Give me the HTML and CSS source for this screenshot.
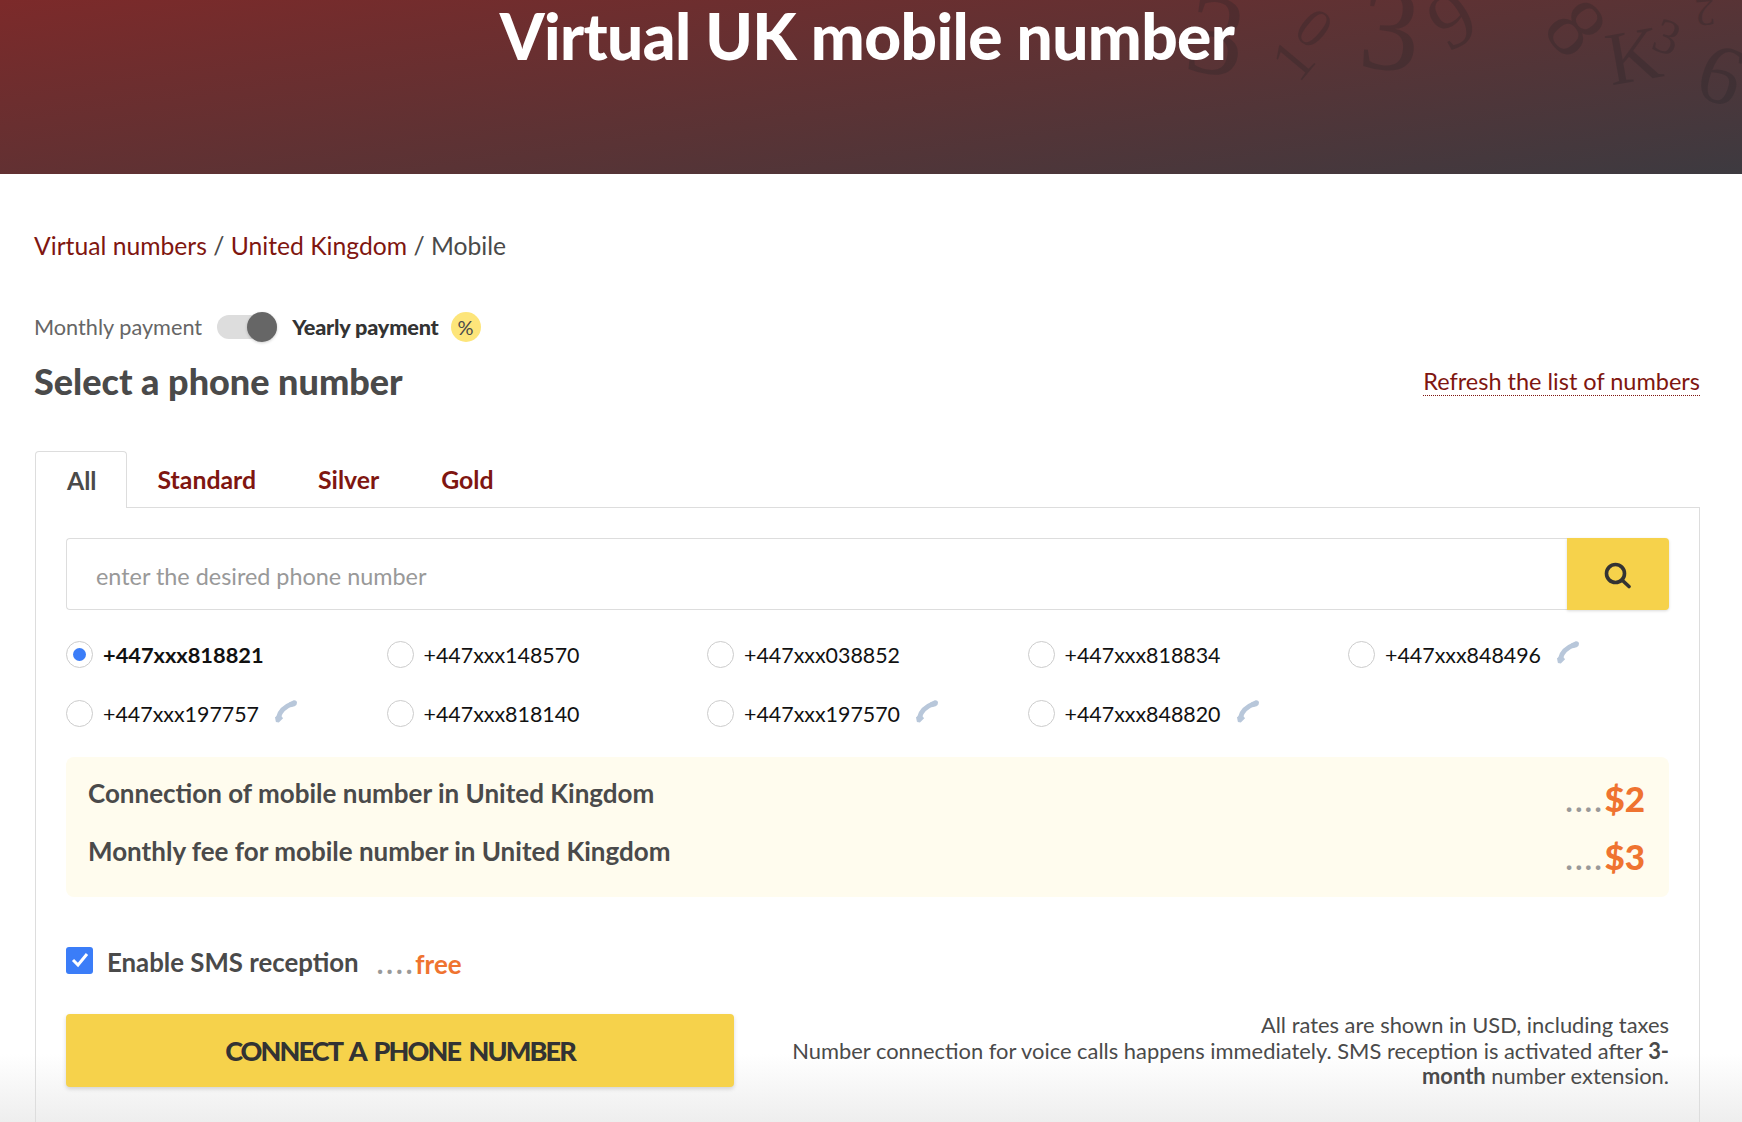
FILE: index.html
```html
<!DOCTYPE html>
<html lang="en">
<head>
    <meta charset="UTF-8">
    <title>Virtual UK mobile number</title>
    <link rel="stylesheet" href="styles.css">
</head>
<body>
    <svg width="0" height="0" class="defs">
        <symbol id="phone" viewBox="0 0 24 24">
            <path d="M4.500 19C6 13 11 7.500 19 4.500" fill="none" stroke="currentColor" stroke-width="5"/>
            <path d="M1 18.500L6 15.500L9.500 19.500L5 24L2 23.500Z" fill="currentColor"/>
            <path d="M15.500 3.500L20.500 .8Q24 .5 24 3.500Q24 6.500 21.500 7L17.500 8Z" fill="currentColor"/>
        </symbol>
    </svg>

    <header class="hero">
        <svg class="hero-digits" viewBox="0 0 742 174" width="742" height="174">
            <text transform="translate(216 36) rotate(8)" y="0.33em" font-size="115">3</text>
            <text transform="translate(293 60) rotate(-50)" y="0.33em" font-size="60">1</text>
            <text transform="translate(314 28) rotate(40)" y="0.33em" font-size="56">0</text>
            <text transform="translate(390 30) rotate(5)" y="0.33em" font-size="120">3</text>
            <text transform="translate(452 20) rotate(-30)" y="0.33em" font-size="80">9</text>
            <text transform="translate(576 28) rotate(50)" y="0.33em" font-size="85">8</text>
            <text transform="translate(634 56) rotate(-10)" y="0.33em" font-size="76">K</text>
            <text transform="translate(667 37) rotate(20)" y="0.33em" font-size="50">3</text>
            <text transform="translate(705 12) rotate(175)" y="0.33em" font-size="40">2</text>
            <text transform="translate(721 75) rotate(20)" y="0.33em" font-size="85">6</text>
        </svg>
        <h1>Virtual UK mobile number</h1>
    </header>

    <main class="container">
        <div class="crumbs">
            <a href="#">Virtual numbers</a> / <a href="#">United Kingdom</a> / Mobile
        </div>

        <div class="billing">
            <span class="billing-off">Monthly payment</span>
            <span class="toggle"><span class="toggle-knob"></span></span>
            <b class="billing-on">Yearly payment</b>
            <span class="percent">%</span>
        </div>

        <div class="title-row">
            <h2>Select a phone number</h2>
            <a href="#" class="refresh">Refresh the list of numbers</a>
        </div>

        <nav class="tabs">
            <a href="#" class="tab active">All</a>
            <a href="#" class="tab">Standard</a>
            <a href="#" class="tab">Silver</a>
            <a href="#" class="tab">Gold</a>
        </nav>

        <section class="panel">
            <div class="search">
                <input type="text" class="search-input" placeholder="enter the desired phone number">
                <button class="search-btn">
                    <svg width="28" height="28" viewBox="0 0 28 28" fill="none" stroke="#333" stroke-width="3.600">
                        <circle cx="12.500" cy="12.500" r="9"/>
                        <path d="M19 19L26 25.500" stroke-linecap="round"/>
                    </svg>
                </button>
            </div>

            <div class="numbers">
                <label class="number selected"><span class="radio"></span>+447xxx818821</label>
                <label class="number"><span class="radio"></span>+447xxx148570</label>
                <label class="number"><span class="radio"></span>+447xxx038852</label>
                <label class="number"><span class="radio"></span>+447xxx818834</label>
                <label class="number"><span class="radio"></span>+447xxx848496<svg class="phone"><use href="#phone"/></svg></label>
                <label class="number"><span class="radio"></span>+447xxx197757<svg class="phone"><use href="#phone"/></svg></label>
                <label class="number"><span class="radio"></span>+447xxx818140</label>
                <label class="number"><span class="radio"></span>+447xxx197570<svg class="phone"><use href="#phone"/></svg></label>
                <label class="number"><span class="radio"></span>+447xxx848820<svg class="phone"><use href="#phone"/></svg></label>
            </div>

            <div class="fees">
                <div class="fee">
                    <span class="fee-name">Connection of mobile number in United Kingdom</span>
                    <span class="fee-price"><i class="dots">....</i>$2</span>
                </div>
                <div class="fee">
                    <span class="fee-name">Monthly fee for mobile number in United Kingdom</span>
                    <span class="fee-price"><i class="dots">....</i>$3</span>
                </div>
            </div>

            <div class="sms">
                <span class="check">
                    <svg width="18" height="16" viewBox="0 0 18 16" fill="none" stroke="#fff" stroke-width="3"><path d="M2 8L7 13L16 2"/></svg>
                </span>
                <span class="sms-label">Enable SMS reception</span>
                <span class="sms-free"><i class="dots">....</i>free</span>
            </div>

            <div class="bottom">
                <button class="connect">CONNECT A PHONE NUMBER</button>
                <p class="note">All rates are shown in USD, including taxes<br>Number connection for voice calls happens immediately. SMS reception is activated after <b>3-month</b> number extension.</p>
            </div>
        </section>
    </main>
</body>
</html>
```
FILE: styles.css
```css
* {
    margin: 0;
    padding: 0;
    box-sizing: border-box;
}

html, body {
    height: 1122px;
    overflow: hidden;
}

html {
    background: #fff;
}

body {
    font-family: Lato, "Noto Sans", sans-serif;
    font-size: 22px;
    color: #4a4a4a;
    position: relative;
}

/* bottom fade, sits behind the content */
body::after {
    content: '';
    position: absolute;
    left: 0;
    right: 0;
    bottom: 0;
    height: 68px;
    background: linear-gradient(rgba(238, 238, 238, 0), #eee);
    pointer-events: none;
    z-index: -1;
}

a {
    color: #7f1610;
    text-decoration: none;
}

.defs {
    position: absolute;
}

.hero {
    height: 174px;
    position: relative;
    overflow: hidden;
    background: linear-gradient(172deg, #7c2a2a 0%, #5a3335 55%, #3d3a40 100%);
    padding-right: 8px;
    text-align: center;
}

.hero h1 {
    position: relative;
    font-size: 64px;
    line-height: 72px;
    font-weight: 900;
    letter-spacing: -0.6px;
    color: #fff;
}

.hero-digits {
    position: absolute;
    top: 0;
    right: 0;
    font-family: "Liberation Serif", serif;
    text-anchor: middle;
    fill: #1e2024;
    opacity: 0.24;
}

.container {
    padding: 58px 42px 0 34px;
}

.crumbs {
    font-size: 24.700px;
    line-height: 28px;
}

.billing {
    display: flex;
    align-items: center;
    height: 30px;
    margin-top: 52px;
}

.billing-off {
    color: #666;
    font-size: 21.700px;
}

.toggle {
    position: relative;
    width: 60px;
    height: 24px;
    margin-left: 15px;
    border-radius: 12px;
    background: #ddd;
}

.toggle-knob {
    position: absolute;
    right: 0;
    top: -3px;
    width: 30px;
    height: 30px;
    border-radius: 50%;
    background: #666;
    box-shadow: 0 1px 3px rgba(0, 0, 0, 0.2);
}

.billing-on {
    margin-left: 15px;
    font-size: 21.700px;
    font-weight: 900;
    letter-spacing: -0.2px;
    color: #333;
}

.percent {
    width: 30px;
    height: 30px;
    margin-left: 12px;
    border-radius: 50%;
    background: #fde57a;
    font-size: 20px;
    line-height: 30px;
    text-align: center;
}

.title-row {
    display: flex;
    justify-content: space-between;
    align-items: center;
    margin-top: 17px;
}

.title-row h2 {
    font-size: 36px;
    line-height: 44px;
    font-weight: 900;
}

.refresh {
    font-size: 23.500px;
    border-bottom: 1px dotted #7f1610;
    line-height: 27px;
    margin-top: 2px;
}

.tabs {
    display: flex;
    align-items: flex-end;
    margin-top: 48px;
    padding-left: 1px;
    height: 56px;
}

.tab {
    height: 56px;
    padding: 0 31px;
    font-size: 24.800px;
    font-weight: 700;
    line-height: 58px;
}

.tab.active {
    color: #4a4a4a;
    background: #fff;
    border: 1px solid #ddd;
    border-bottom: none;
    border-radius: 4px 4px 0 0;
    position: relative;
    margin-bottom: -1px;
    height: 57px;
    padding-right: 29px;
    z-index: 1;
}

.panel {
    margin-left: 1px;
    height: 700px;
    padding: 30px 30px;
    border: 1px solid #ddd;
}

.search {
    display: flex;
    height: 72px;
}

.search-input {
    flex: 1;
    border: 1px solid #ddd;
    border-right: none;
    border-radius: 4px 0 0 4px;
    padding: 3px 29px 0;
    font-family: inherit;
    font-size: 23.400px;
    outline: none;
}

.search-input::placeholder {
    color: #999;
}

.search-btn {
    width: 102px;
    padding: 4px 3px 0 0;
    border: none;
    border-radius: 0 4px 4px 0;
    background: #f6d24b;
    box-shadow: 0 1px 3px rgba(0, 0, 0, 0.15);
}

.numbers {
    display: grid;
    grid-template-columns: repeat(5, 320.500px);
    grid-auto-rows: 59px;
    margin-top: 15px;
}

.number {
    display: flex;
    align-items: center;
    color: #111;
    font-size: 21.400px;
}

.number.selected {
    font-weight: 700;
    font-size: 21.800px;
}

.radio {
    position: relative;
    width: 27px;
    height: 27px;
    margin-right: 10px;
    border: 1px solid #ccc;
    border-radius: 50%;
}

.selected .radio::after {
    content: '';
    position: absolute;
    left: 6px;
    top: 6px;
    width: 13px;
    height: 13px;
    border-radius: 50%;
    background: #3b7df8;
}

.phone {
    width: 23px;
    height: 24px;
    margin: -6px 0 0 15px;
    color: #b8c7da;
}

.fees {
    margin-top: 14px;
    padding: 10px 24px 9px 22px;
    height: 140px;
    border-radius: 8px;
    background: #fffcee;
}

.fee {
    display: flex;
    justify-content: space-between;
    height: 58px;
}

.fee-name {
    font-size: 26px;
    font-weight: 700;
    line-height: 52px;
}

.fee-price {
    font-size: 35px;
    font-weight: 900;
    line-height: 62px;
    color: #ef7330;
}

.dots {
    font-style: normal;
    color: #999;
    font-size: 28px;
    letter-spacing: 3px;
}

.sms {
    display: flex;
    align-items: center;
    margin-top: 48px;
    height: 30px;
}

.check {
    display: flex;
    align-items: center;
    justify-content: center;
    width: 27px;
    height: 27px;
    margin-right: 14px;
    border-radius: 3px;
    background: #3b7df8;
}

.sms-label {
    margin-top: 3px;
    font-size: 25.800px;
    font-weight: 700;
}

.sms-free {
    margin-left: 18px;
    margin-top: 5px;
    font-size: 26px;
    font-weight: 700;
    color: #ef7330;
}

.bottom {
    display: flex;
    justify-content: space-between;
    margin-top: 39px;
}

.connect {
    width: 668px;
    height: 73px;
    border: none;
    border-radius: 4px;
    background: #f6d24b;
    box-shadow: 0 2px 4px rgba(0, 0, 0, 0.15);
    color: #333;
    font-family: inherit;
    font-size: 27px;
    font-weight: 900;
    letter-spacing: -1.900px;
    word-spacing: 4px;
}

.note {
    width: 885px;
    margin-top: -2px;
    font-size: 21.900px;
    line-height: 25.500px;
    text-align: right;
}
```
